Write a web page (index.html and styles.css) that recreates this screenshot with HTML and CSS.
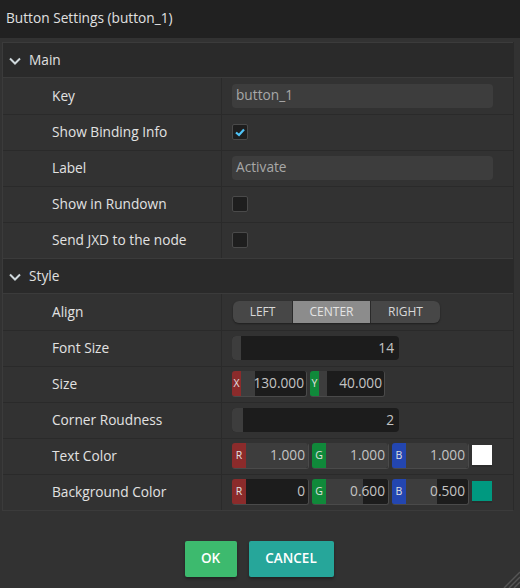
FILE: index.html
```html
<!DOCTYPE html>
<html>
<head>
<meta charset="utf-8">
<link rel="stylesheet" href="styles.css">
</head>
<body>
<div class="titlebar">Button Settings (button_1)</div>
<div class="panel">
  <div class="section">
    <svg class="chev" width="12" height="8" viewBox="0 0 12 8"><polyline points="1,1.5 6,6.5 11,1.5" fill="none" stroke="#cfd8dc" stroke-width="2"/></svg>
    <span>Main</span>
  </div>
  <div class="row">
    <div class="label">Key</div>
    <div class="value"><div class="text-input">button_1</div></div>
  </div>
  <div class="row">
    <div class="label">Show Binding Info</div>
    <div class="value"><div class="checkbox"><svg width="14" height="14" viewBox="0 0 14 14"><polyline points="3,7.5 6,10 11,4.5" fill="none" stroke="#4fc3f7" stroke-width="2.2"/></svg></div></div>
  </div>
  <div class="row">
    <div class="label">Label</div>
    <div class="value"><div class="text-input">Activate</div></div>
  </div>
  <div class="row">
    <div class="label">Show in Rundown</div>
    <div class="value"><div class="checkbox"></div></div>
  </div>
  <div class="row">
    <div class="label">Send JXD to the node</div>
    <div class="value"><div class="checkbox"></div></div>
  </div>
  <div class="section">
    <svg class="chev" width="12" height="8" viewBox="0 0 12 8"><polyline points="1,1.5 6,6.5 11,1.5" fill="none" stroke="#cfd8dc" stroke-width="2"/></svg>
    <span>Style</span>
  </div>
  <div class="row">
    <div class="label">Align</div>
    <div class="value">
      <div class="seg">
        <div class="seg-btn seg-left">LEFT</div>
        <div class="seg-btn seg-center active">CENTER</div>
        <div class="seg-btn seg-right">RIGHT</div>
      </div>
    </div>
  </div>
  <div class="row">
    <div class="label">Font Size</div>
    <div class="value">
      <div class="slider"><div class="fill" style="width:9px"></div><span class="num">14</span></div>
    </div>
  </div>
  <div class="row">
    <div class="label">Size</div>
    <div class="value">
      <div class="vec">
        <div class="field field-size"><span class="tag tag-x">X</span><div class="track"><div class="fill" style="width:14px"></div><span class="num">130.000</span></div></div>
        <div class="field field-size"><span class="tag tag-y">Y</span><div class="track"><div class="fill" style="width:8px"></div><span class="num">40.000</span></div></div>
      </div>
    </div>
  </div>
  <div class="row">
    <div class="label">Corner Roudness</div>
    <div class="value">
      <div class="slider"><div class="fill" style="width:11px"></div><span class="num">2</span></div>
    </div>
  </div>
  <div class="row">
    <div class="label">Text Color</div>
    <div class="value">
      <div class="vec">
        <div class="field field-color"><span class="tag tag-r">R</span><div class="track"><div class="fill" style="width:100%"></div><span class="num">1.000</span></div></div>
        <div class="field field-color"><span class="tag tag-g">G</span><div class="track"><div class="fill" style="width:100%"></div><span class="num">1.000</span></div></div>
        <div class="field field-color"><span class="tag tag-b">B</span><div class="track"><div class="fill" style="width:100%"></div><span class="num">1.000</span></div></div>
        <div class="swatch" style="background:#ffffff"></div>
      </div>
    </div>
  </div>
  <div class="row">
    <div class="label">Background Color</div>
    <div class="value">
      <div class="vec">
        <div class="field field-color"><span class="tag tag-r">R</span><div class="track"><div class="fill" style="width:0%"></div><span class="num">0</span></div></div>
        <div class="field field-color"><span class="tag tag-g">G</span><div class="track"><div class="fill" style="width:60%"></div><span class="num">0.600</span></div></div>
        <div class="field field-color"><span class="tag tag-b">B</span><div class="track"><div class="fill" style="width:50%"></div><span class="num">0.500</span></div></div>
        <div class="swatch" style="background:#009980"></div>
      </div>
    </div>
  </div>
</div>
<div class="actions">
  <div class="btn btn-ok">OK</div>
  <div class="btn btn-cancel">CANCEL</div>
</div>
<svg class="grip" width="18" height="18" viewBox="0 0 18 18">
  <line x1="18" y1="2" x2="2" y2="18" stroke="#555" stroke-width="1.5"/>
  <line x1="18" y1="7" x2="7" y2="18" stroke="#555" stroke-width="1.5"/>
  <line x1="18" y1="12" x2="12" y2="18" stroke="#555" stroke-width="1.5"/>
</svg>
</body>
</html>
```
FILE: styles.css
```css
* { box-sizing: border-box; }
html, body {
  margin: 0;
  height: 100%;
}
body {
  background: #323232;
  font-family: "Open Sans", "Noto Sans", sans-serif;
  font-size: 13.7px;
  color: #dcdcdc;
  position: relative;
  overflow: hidden;
}
.titlebar {
  height: 38px;
  background: #212121;
  padding-left: 6px;
  line-height: 35px;
  color: #e0e0e0;
}
.panel {
  margin: 4px 6px 0 2px;
  border: 1px solid #3b3b3b;
  border-right-color: #2a2a2a;
  border-top: none;
}
.section {
  height: 36px;
  background: #2a2a2a;
  border-top: 1px solid #3b3b3b;
  border-bottom: 1px solid #3b3b3b;
  display: flex;
  align-items: center;
  padding-left: 6px;
  padding-bottom: 1px;
  color: #e0e0e0;
}
.section + .row { border-top: none; }
.chev { margin-right: 8px; margin-top: 2px; }
.row {
  height: 36px;
  display: grid;
  grid-template-columns: 219px 1fr;
  border-top: 1px solid #2a2a2a;
}
.label {
  border-right: 1px solid #2a2a2a;
  padding-left: 49px;
  padding-bottom: 2px;
  display: flex;
  align-items: center;
  color: #e2e2e2;
}
.value {
  padding-left: 10px;
  padding-bottom: 1px;
  display: flex;
  align-items: center;
}
.text-input {
  width: 261px;
  height: 24px;
  background: #3d3d3d;
  border-radius: 4px;
  padding-left: 4px;
  line-height: 22px;
  color: #a8a8a8;
}
.checkbox {
  width: 16px;
  height: 16px;
  background: #1e1e1e;
  border: 1px solid #4a4a4a;
  border-radius: 2px;
  display: flex;
  align-items: center;
  justify-content: center;
}
.seg {
  display: flex;
  gap: 1px;
  margin-left: 1px;
  margin-top: 1px;
  border-radius: 6px;
  box-shadow: 0 1px 2px rgba(0,0,0,0.4);
  background: #2a2a2a;
}
.seg-btn {
  height: 22px;
  line-height: 21px;
  background: #474747;
  font-size: 12px;
  text-align: center;
  color: #d8d8d8;
}
.seg-left { width: 59px; border-radius: 6px 0 0 6px; }
.seg-center { width: 77px; }
.seg-right { width: 69px; border-radius: 0 6px 6px 0; }
.seg-btn.active { background: #8c8c8c; color: #e4e4e4; }
.slider {
  position: relative;
  width: 167px;
  height: 24px;
  background: #1c1c1c;
  border-radius: 4px;
  overflow: hidden;
  display: flex;
  align-items: center;
  justify-content: flex-end;
  padding-bottom: 1px;
}
.fill {
  position: absolute;
  left: 0;
  top: 0;
  bottom: 0;
  background: #3d3d3d;
}
.num {
  position: relative;
  padding-right: 5px;
  color: #c4c4c4;
}
.vec {
  display: flex;
  align-items: center;
  gap: 3px;
}
.field {
  display: flex;
  height: 26px;
  border-radius: 3px;
  overflow: hidden;
  border-bottom: 1px solid #4a4a4a;
  border-right: 1px solid #4a4a4a;
}
.field-size { width: 75px; }
.field-color { width: 77px; }
.tag {
  color: #e0e0e0;
  font-size: 10.5px;
  display: flex;
  align-items: center;
  justify-content: center;
  flex: none;
  padding-bottom: 2px;
}
.field-size .tag { width: 9px; }
.field-color .tag { width: 14px; }
.tag-x, .tag-r { background: #8b2b2b; }
.tag-y, .tag-g { background: #10893a; }
.tag-b { background: #2346b0; }
.track {
  position: relative;
  flex: 1;
  background: #1c1c1c;
  display: flex;
  align-items: center;
  justify-content: flex-end;
  padding-bottom: 2px;
}
.field-size .num { padding-right: 2px; }
.field-color .num { padding-right: 3px; }
.swatch {
  width: 20px;
  height: 20px;
  margin-top: -2px;
  box-shadow: 0 2px 0 #2c2c2c;
}
.actions {
  display: flex;
  justify-content: center;
  gap: 12px;
  margin-top: 30px;
  padding-right: 2px;
}
.btn {
  height: 36px;
  line-height: 35px;
  color: #fff;
  font-weight: 600;
  font-size: 13.5px;
  border-radius: 2px;
  box-shadow: 0 2px 3px rgba(0,0,0,0.35);
  text-align: center;
}
.btn-ok { width: 52px; background: #3dba6e; }
.btn-cancel { width: 85px; background: #26a69a; }
.grip {
  position: absolute;
  right: 0;
  bottom: 0;
}
```
